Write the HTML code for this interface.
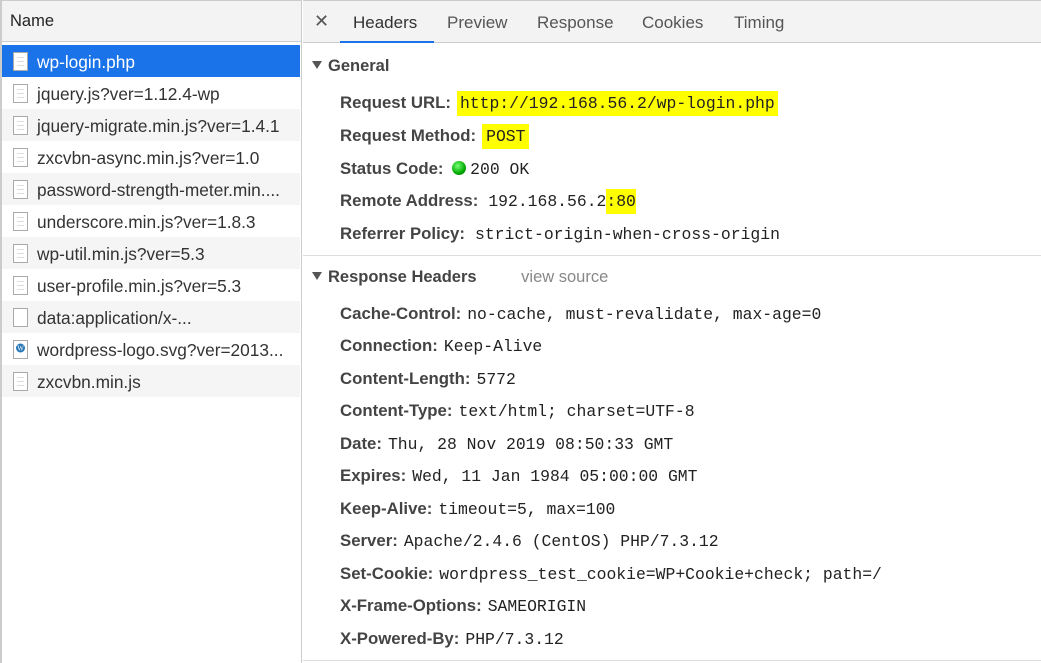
<!DOCTYPE html><html><head><style>
*{margin:0;padding:0;box-sizing:border-box}
body{width:1041px;height:663px;background:#fff;font-family:"Liberation Sans",sans-serif;color:#333;position:relative;overflow:hidden}
#left{position:absolute;left:0;top:0;width:302px;height:663px;border-right:1px solid #ccc;border-left:2px solid #ccc}
#lh{height:42px;background:#f3f3f3;border-bottom:1px solid #ccc;border-top:1px solid #ccc;font-size:16.5px;padding:11px 0 0 8px;color:#222}
.row{position:absolute;left:2px;width:298px;height:32px;font-size:17.3px;line-height:34px;padding-left:35px;color:#333;white-space:nowrap;overflow:hidden}
.row.g{background:#f5f5f5}
.row.sel{background:#1a73e8;color:#fff}
.ic{position:absolute;left:11px;top:7px;width:15px;height:19px;border:1px solid #aaa;background:#fff}
.ic i{position:absolute;left:3px;right:3px;height:1px;background:#ddd}
#right{position:absolute;left:303px;top:0;right:0;height:663px}
#tabs{height:43px;background:#f3f3f3;border-bottom:1px solid #ccc;border-top:1px solid #ccc;font-size:17px;color:#555;position:relative}
#tabs span{position:absolute;top:12px}
.sec{position:absolute;left:9px;font-size:16.5px;font-weight:bold;color:#444}
.sec:before{content:"";display:inline-block;border-left:5px solid transparent;border-right:5px solid transparent;border-top:8px solid #555;margin-right:6px;vertical-align:2px}
.kv{position:absolute;left:37px;font-size:16.8px;white-space:nowrap}
.kv b{color:#444}
.kv m{font-family:"Liberation Mono",monospace;font-size:16.4px;color:#222;margin-left:6px}
.hl{background:#ffff00}
</style></head><body>
<div id="left"><div id="lh">Name</div></div>
<div class="row sel" style="top:45px"><span class="ic"><i style="top:4px"></i><i style="top:8px"></i><i style="top:12px"></i></span>wp-login.php</div>
<div class="row" style="top:77px"><span class="ic"><i style="top:4px"></i><i style="top:8px"></i><i style="top:12px"></i></span>jquery.js?ver=1.12.4-wp</div>
<div class="row g" style="top:109px"><span class="ic"><i style="top:4px"></i><i style="top:8px"></i><i style="top:12px"></i></span>jquery-migrate.min.js?ver=1.4.1</div>
<div class="row" style="top:141px"><span class="ic"><i style="top:4px"></i><i style="top:8px"></i><i style="top:12px"></i></span>zxcvbn-async.min.js?ver=1.0</div>
<div class="row g" style="top:173px"><span class="ic"><i style="top:4px"></i><i style="top:8px"></i><i style="top:12px"></i></span>password-strength-meter.min....</div>
<div class="row" style="top:205px"><span class="ic"><i style="top:4px"></i><i style="top:8px"></i><i style="top:12px"></i></span>underscore.min.js?ver=1.8.3</div>
<div class="row g" style="top:237px"><span class="ic"><i style="top:4px"></i><i style="top:8px"></i><i style="top:12px"></i></span>wp-util.min.js?ver=5.3</div>
<div class="row" style="top:269px"><span class="ic"><i style="top:4px"></i><i style="top:8px"></i><i style="top:12px"></i></span>user-profile.min.js?ver=5.3</div>
<div class="row g" style="top:301px"><span class="ic"></span>data:application/x-...</div>
<div class="row" style="top:333px"><span class="ic"><svg width="13" height="17" style="position:absolute;left:0;top:0"><circle cx="6.5" cy="7" r="4.5" fill="#2a78b8"/><text x="6.5" y="9.5" font-size="7" fill="#fff" text-anchor="middle" font-family="Liberation Serif">W</text></svg></span>wordpress-logo.svg?ver=2013...</div>
<div class="row g" style="top:365px"><span class="ic"><i style="top:4px"></i><i style="top:8px"></i><i style="top:12px"></i></span>zxcvbn.min.js</div>
<div id="right">
<div id="tabs">
<span style="left:11px;top:10px;font-size:18px;color:#555">✕</span>
<span style="left:50px;color:#333">Headers</span>
<div style="position:absolute;left:37px;top:40px;width:94px;height:2px;background:#1a73e8"></div>
<span style="left:144px">Preview</span>
<span style="left:234px">Response</span>
<span style="left:339px">Cookies</span>
<span style="left:431px">Timing</span>
</div>
<div class="sec" style="top:57px">General</div>
<div class="kv" style="top:93px"><b>Request URL:</b><m class="hl" style="padding:3px 3px">http://192.168.56.2/wp-login.php</m></div>
<div class="kv" style="top:126px"><b>Request Method:</b><m class="hl" style="padding:3px 4px">POST</m></div>
<div class="kv" style="top:159px"><b>Status Code:</b> <span style="display:inline-block;width:14px;height:14px;border-radius:50%;background:radial-gradient(circle at 40% 35%,#7f7,#0a0 60%,#060);vertical-align:-1px;margin-left:4px"></span><m style="margin-left:4px">200 OK</m></div>
<div class="kv" style="top:191px"><b>Remote Address:</b><m style="margin-left:10px">192.168.56.2<span class="hl" style="padding:3px 0">:80</span></m></div>
<div class="kv" style="top:224px"><b>Referrer Policy:</b><m style="margin-left:10px">strict-origin-when-cross-origin</m></div>
<div style="position:absolute;left:0;right:0;top:255px;height:1px;background:#ddd"></div>
<div class="sec" style="top:268px">Response Headers <span style="font-weight:normal;color:#888;margin-left:40px">view source</span></div>
<div class="kv" style="top:304px"><b>Cache-Control:</b><m>no-cache, must-revalidate, max-age=0</m></div>
<div class="kv" style="top:336px"><b>Connection:</b><m>Keep-Alive</m></div>
<div class="kv" style="top:369px"><b>Content-Length:</b><m>5772</m></div>
<div class="kv" style="top:401px"><b>Content-Type:</b><m>text/html; charset=UTF-8</m></div>
<div class="kv" style="top:434px"><b>Date:</b><m>Thu, 28 Nov 2019 08:50:33 GMT</m></div>
<div class="kv" style="top:466px"><b>Expires:</b><m>Wed, 11 Jan 1984 05:00:00 GMT</m></div>
<div class="kv" style="top:499px"><b>Keep-Alive:</b><m>timeout=5, max=100</m></div>
<div class="kv" style="top:531px"><b>Server:</b><m>Apache/2.4.6 (CentOS) PHP/7.3.12</m></div>
<div class="kv" style="top:564px"><b>Set-Cookie:</b><m>wordpress_test_cookie=WP+Cookie+check; path=/</m></div>
<div class="kv" style="top:596px"><b>X-Frame-Options:</b><m>SAMEORIGIN</m></div>
<div class="kv" style="top:629px"><b>X-Powered-By:</b><m>PHP/7.3.12</m></div>
<div style="position:absolute;left:0;right:0;top:660px;height:1px;background:#ddd"></div>
</div>
</body></html>
